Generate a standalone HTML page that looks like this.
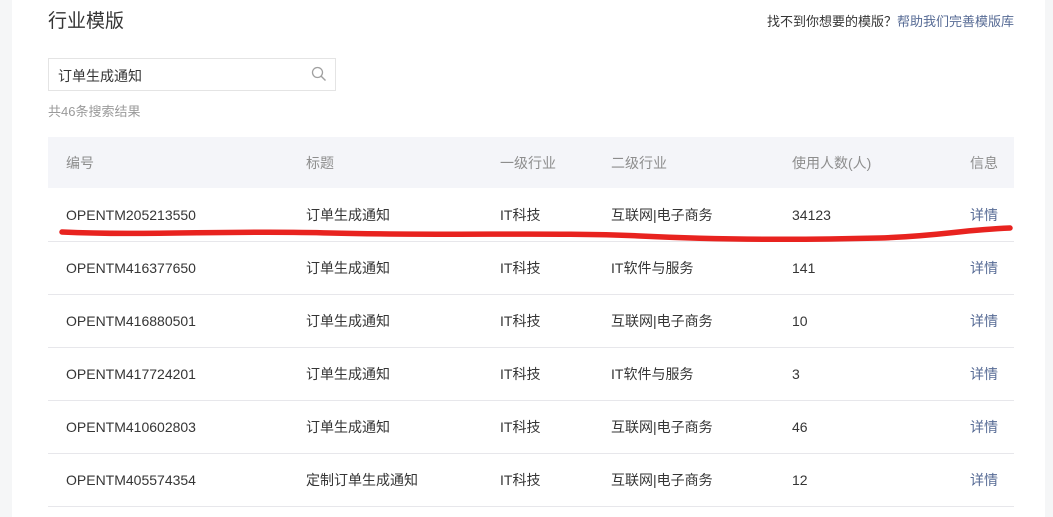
<!DOCTYPE html>
<html><head><meta charset="utf-8"><style>
body{margin:0;width:1053px;height:517px;overflow:hidden;background:#f5f6f7;font-family:"Liberation Sans","Noto Sans CJK SC",sans-serif;position:relative}
.main{position:absolute;left:12px;top:0;width:1033px;height:517px;background:#fff}
.t{position:absolute;white-space:nowrap}
.row{position:absolute;left:48px;width:966px;height:53px;border-bottom:1px solid #e7e7eb;font-size:14px;color:#353535}
.row span{position:absolute;top:1px;line-height:53px;white-space:nowrap}
.hd{background:#f4f5f9;color:#8d8d8d;border:none;height:51px}
.hd span{line-height:51px}
.a{color:#576b95}
</style></head><body>
<div class="main"></div>
<div class="t" style="left:48px;top:6px;font-size:19px;color:#353535">行业模版</div>
<div class="t" style="left:767px;top:11px;font-size:13px;color:#353535">找不到你想要的模版<span style="font-family:'Noto Sans CJK SC',sans-serif">？</span><span class="a">帮助我们完善模版库</span></div>
<div style="position:absolute;left:48px;top:58px;width:286px;height:31px;border:1px solid #e4e4e4;background:#fff"></div>
<div class="t" style="left:58px;top:66px;font-size:14px;color:#353535">订单生成通知</div>
<svg style="position:absolute;left:311px;top:66px" width="16" height="16" viewBox="0 0 16 16"><circle cx="6.5" cy="6.5" r="5" fill="none" stroke="#a0a0a0" stroke-width="1.3"/><path d="M10.2 10.2L14.5 14.5" stroke="#a0a0a0" stroke-width="1.4"/></svg>
<div class="t" style="left:48px;top:101px;font-size:13px;color:#9a9a9a">共46条搜索结果</div>
<div class="row hd" style="top:137px"><span style="left:18px">编号</span><span style="left:258px">标题</span><span style="left:452px">一级行业</span><span style="left:563px">二级行业</span><span style="left:744px">使用人数(人)</span><span style="left:922px">信息</span></div>
<div class="row" style="top:188px"><span style="left:18px">OPENTM205213550</span><span style="left:258px">订单生成通知</span><span style="left:452px">IT科技</span><span style="left:563px">互联网|电子商务</span><span style="left:744px">34123</span><span class="a" style="left:922px">详情</span></div>
<div class="row" style="top:241px"><span style="left:18px">OPENTM416377650</span><span style="left:258px">订单生成通知</span><span style="left:452px">IT科技</span><span style="left:563px">IT软件与服务</span><span style="left:744px">141</span><span class="a" style="left:922px">详情</span></div>
<div class="row" style="top:294px"><span style="left:18px">OPENTM416880501</span><span style="left:258px">订单生成通知</span><span style="left:452px">IT科技</span><span style="left:563px">互联网|电子商务</span><span style="left:744px">10</span><span class="a" style="left:922px">详情</span></div>
<div class="row" style="top:347px"><span style="left:18px">OPENTM417724201</span><span style="left:258px">订单生成通知</span><span style="left:452px">IT科技</span><span style="left:563px">IT软件与服务</span><span style="left:744px">3</span><span class="a" style="left:922px">详情</span></div>
<div class="row" style="top:400px"><span style="left:18px">OPENTM410602803</span><span style="left:258px">订单生成通知</span><span style="left:452px">IT科技</span><span style="left:563px">互联网|电子商务</span><span style="left:744px">46</span><span class="a" style="left:922px">详情</span></div>
<div class="row" style="top:453px"><span style="left:18px">OPENTM405574354</span><span style="left:258px">定制订单生成通知</span><span style="left:452px">IT科技</span><span style="left:563px">互联网|电子商务</span><span style="left:744px">12</span><span class="a" style="left:922px">详情</span></div>
<svg style="position:absolute;left:0;top:0" width="1053" height="517"><path d="M62 232 C150 236 230 230 330 233 C450 236 560 232 640 236 C720 240 800 240 880 238 C940 236 960 230 1010 228" fill="none" stroke="#e8231f" stroke-width="5.5" stroke-linecap="round"/></svg>
</body></html>
